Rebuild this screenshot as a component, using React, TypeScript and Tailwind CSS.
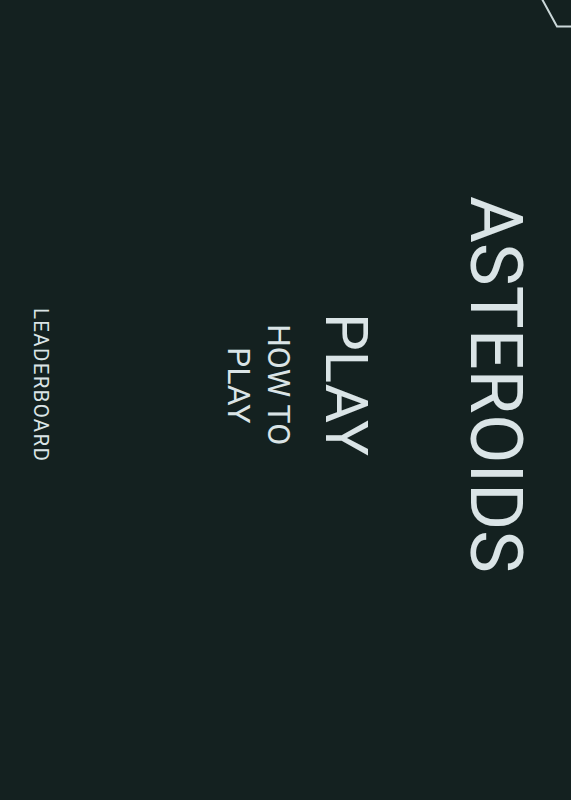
import React from "react";

// Menu screen, laid out in vertical-rl so the whole page reads rotated a quarter turn.
function CornerMark() {
  return (
    <svg className="pointer-events-none absolute right-0 top-0" width="40" height="40" viewBox="0 0 40 40" fill="none">
      <path d="M11 -1 L26 26.5 L41 26.5" stroke="#cbd8d9" strokeWidth="2" />
    </svg>
  );
}

export default function App() {
  return (
    <div className="relative h-[800px] w-[571px] overflow-hidden bg-[#142120] font-[Roboto,sans-serif] text-[#dae4e6]">
      <CornerMark />
      <div className="flex h-full w-full flex-col items-center pb-[30px] pl-[27px] pr-[40px] [writing-mode:vertical-rl]">
        <h1 className="text-[72px] font-normal leading-[72px]">ASTEROIDS</h1>
        <button className="mr-[83px] text-[60px] leading-[60px]">PLAY</button>
        <button className="mr-[17px] h-[170px] text-center text-[32px] leading-[40px]">HOW TO PLAY</button>
        <button className="mr-auto text-[20.5px] leading-[28px] tracking-[1.3px]">LEADERBOARD</button>
      </div>
    </div>
  );
}
